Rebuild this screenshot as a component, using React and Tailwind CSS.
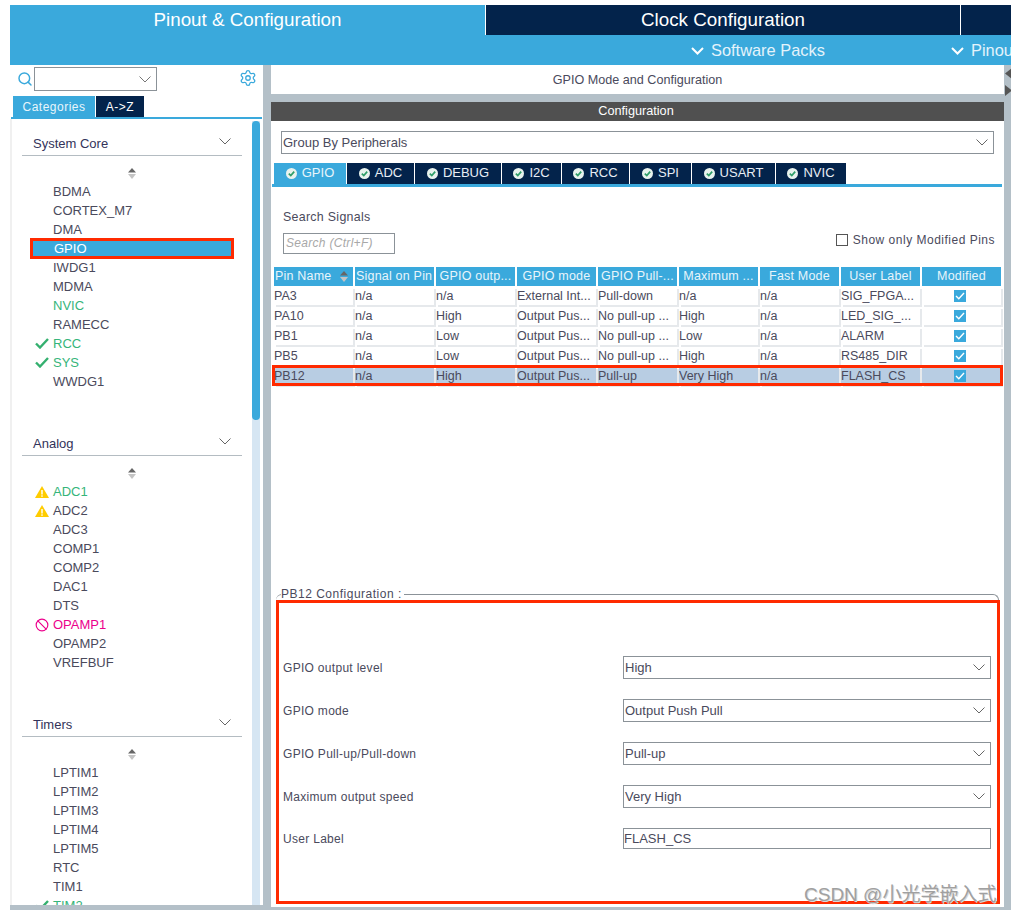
import React from "react";
import { Search, Settings, Ban } from "lucide-react";

const Chev = ({ className = "" }) => (
  <svg width="12" height="7" viewBox="0 0 12 7" className={className} fill="none" stroke="currentColor" strokeWidth="1">
    <path d="M0.5 0.5 L6 6 L11.5 0.5" />
  </svg>
);

const BoldChev = () => (
  <svg width="13" height="8" viewBox="0 0 13 8" fill="none" stroke="#fff" strokeWidth="2" className="shrink-0">
    <path d="M1 1 L6.5 6.5 L12 1" />
  </svg>
);

const Sorter = () => (
  <svg width="10" height="11" viewBox="0 0 10 11" className="block">
    <path d="M5 0 L9 4.5 L1 4.5 Z" fill="#666" />
    <path d="M1 6 L9 6 L5 11 Z" fill="#c4c4c4" />
  </svg>
);

const GreenCheck = () => (
  <svg width="14" height="11" viewBox="0 0 14 11" fill="none" stroke="#34b06f" strokeWidth="2.4">
    <path d="M1 5.5 L5 9.5 L13 1" />
  </svg>
);

const Warn = () => (
  <svg width="14" height="12" viewBox="0 0 14 12">
    <path d="M7 0 L14 12 L0 12 Z" fill="#ffcc00" />
    <rect x="6.3" y="4" width="1.4" height="4.5" fill="#fff" />
    <rect x="6.3" y="9.3" width="1.4" height="1.5" fill="#fff" />
  </svg>
);

const TabCheck = () => (
  <svg width="11" height="11" viewBox="0 0 11 11" className="shrink-0">
    <circle cx="5.5" cy="5.5" r="5.5" fill="#e8f3ee" />
    <path d="M2.8 5.6 L4.8 7.6 L8.2 3.6" fill="none" stroke="#2f9e69" strokeWidth="1.7" />
  </svg>
);

const C_GREEN = "text-[#35b57a]";

const sections = [
  {
    title: "System Core",
    items: [
      ["BDMA"], ["CORTEX_M7"], ["DMA"], ["GPIO", "selected"], ["IWDG1"], ["MDMA"], ["NVIC", "green"],
      ["RAMECC"], ["RCC", "green", "check"], ["SYS", "green", "check"], ["WWDG1"],
    ],
  },
  {
    title: "Analog",
    items: [
      ["ADC1", "green", "warn"], ["ADC2", "", "warn"], ["ADC3"], ["COMP1"], ["COMP2"], ["DAC1"], ["DTS"],
      ["OPAMP1", "pink", "ban"], ["OPAMP2"], ["VREFBUF"],
    ],
  },
  {
    title: "Timers",
    items: [
      ["LPTIM1"], ["LPTIM2"], ["LPTIM3"], ["LPTIM4"], ["LPTIM5"], ["RTC"], ["TIM1"], ["TIM2", "green", "check"],
    ],
  },
];

const Item = ({ name, tone, icon }) => {
  if (tone === "selected") {
    return (
      <div className="relative h-[19px]">
        <div className="absolute left-[18px] top-[-1px] w-[204px] h-[21px] bg-[#3aa9dc] border-[3px] border-[#ff2a00] pl-[21px] text-white leading-[15px]">
          {name}
        </div>
      </div>
    );
  }
  const color = tone === "green" ? C_GREEN : tone === "pink" ? "text-[#ec008c]" : "text-[#4a4a5c]";
  return (
    <div className={`relative h-[19px] leading-[19px] pl-[41px] ${color}`}>
      {icon && (
        <span className="absolute left-[22px] top-[3px] flex w-[15px] h-[13px] items-center justify-center">
          {icon === "check" && <GreenCheck />}
          {icon === "warn" && <Warn />}
          {icon === "ban" && <Ban size={14} strokeWidth={2} className="text-[#ec008c]" />}
        </span>
      )}
      {name}
    </div>
  );
};

const Section = ({ title, items }) => (
  <div className="mb-[40px]">
    <div className="mx-[10px] h-[25px] flex items-start justify-between border-b border-[#b4bcc2] w-[220px] pl-[11px] pr-[11px]">
      <span className="text-[#33335a] text-[13px] leading-[26px]">{title}</span>
      <Chev className="text-[#666] mt-[7px]" />
    </div>
    <div className="h-[26px] flex justify-center pt-[12px] w-[240px] ml-0">
      <Sorter />
    </div>
    <div>
      {items.map(([n, t, i]) => (
        <Item key={n} name={n} tone={t} icon={i} />
      ))}
    </div>
  </div>
);

const cols = ["Pin Name", "Signal on Pin", "GPIO outp...", "GPIO mode", "GPIO Pull-...", "Maximum ...", "Fast Mode", "User Label", "Modified"];
const rows = [
  ["PA3", "n/a", "n/a", "External Int...", "Pull-down", "n/a", "n/a", "SIG_FPGA..."],
  ["PA10", "n/a", "High", "Output Pus...", "No pull-up ...", "High", "n/a", "LED_SIG_..."],
  ["PB1", "n/a", "Low", "Output Pus...", "No pull-up ...", "Low", "n/a", "ALARM"],
  ["PB5", "n/a", "Low", "Output Pus...", "No pull-up ...", "High", "n/a", "RS485_DIR"],
  ["PB12", "n/a", "High", "Output Pus...", "Pull-up", "Very High", "n/a", "FLASH_CS"],
];

const tabs = [
  ["GPIO", "w-[72px]"], ["ADC", "w-[68px]"], ["DEBUG", "w-[87px]"], ["I2C", "w-[60px]"],
  ["RCC", "w-[68px]"], ["SPI", "w-[62px]"], ["USART", "w-[84px]"], ["NVIC", "w-[71px]"],
];

const Check = () => (
  <span className="w-[12px] h-[12px] bg-[#3aa9dc] flex items-center justify-center">
    <svg width="10" height="8" viewBox="0 0 10 8" fill="none" stroke="#fff" strokeWidth="1.4">
      <path d="M1 4 L3.8 6.8 L9 1" />
    </svg>
  </span>
);

const Sel = ({ value, className = "" }) => (
  <div className={`h-[23px] border border-[#8b9298] flex items-center justify-between pl-[1px] pr-[4px] ${className}`}>
    <span className="text-[#4a4a5c]">{value}</span>
    <Chev className="text-[#666] mr-[1px]" />
  </div>
);

const config = [
  ["GPIO output level", "High"],
  ["GPIO mode", "Output Push Pull"],
  ["GPIO Pull-up/Pull-down", "Pull-up"],
  ["Maximum output speed", "Very High"],
];

export default function App() {
  return (
    <div className="relative w-[1011px] h-[914px] bg-white pt-[5px] overflow-hidden text-[13px] text-[#4a4a5c] font-['Liberation_Sans',Arial,sans-serif]">
      {/* header */}
      <div className="ml-[10px] h-[60px] bg-[#3aa9dc] overflow-hidden">
        <div className="flex h-[30px] text-[18.8px] text-white">
          <div className="w-[475px] flex items-center justify-center">Pinout &amp; Configuration</div>
          <div className="w-[475px] border-l border-white bg-[#03234b] flex items-center justify-center">Clock Configuration</div>
          <div className="flex-1 border-l border-white bg-[#03234b]" />
        </div>
        <div className="flex h-[30px] items-center text-[16.4px] text-white pl-[681px] pt-[1px]">
          <BoldChev />
          <span className="ml-[7px] w-[125px] shrink-0 text-[#e4f3fb]">Software Packs</span>
          <span className="ml-[115px]"><BoldChev /></span>
          <span className="ml-[7px] text-[#e4f3fb]">Pinout</span>
        </div>
      </div>

      {/* main */}
      <div className="ml-[10px] h-[845px] bg-[#b4c0c8] flex items-start">
        {/* left */}
        <div className="w-[253px] h-[840px] bg-white flex flex-col shrink-0">
          <div className="h-[31px] flex items-start relative shrink-0">
            <Search size={16} strokeWidth={2.2} className="text-[#3aa9dc] ml-[7px] mt-[6px]" />
            <div className="ml-[1px] mt-[2px] w-[123px] h-[24px] border border-[#8b9298] flex items-center justify-end pr-[5px]">
              <Chev className="text-[#777] mt-[1px]" />
            </div>
            <Settings size={18} strokeWidth={1.7} className="text-[#3aa9dc] ml-[82px] mt-[4px]" />
          </div>
          <div className="h-[21px] flex pl-[3px] shrink-0 text-[12px] tracking-[0.5px]">
            <div className="w-[82px] bg-[#3aa9dc] text-[#e8f5fb] flex items-center justify-center">Categories</div>
            <div className="w-[48px] ml-[1px] bg-[#03234b] text-white flex items-center justify-center">A-&gt;Z</div>
          </div>
          <div className="h-[2px] ml-[1px] w-[251px] bg-[#3aa9dc] shrink-0" />
          <div className="flex-1 min-h-0 flex">
            <div className="w-[242px] border-l-2 border-[#f0f0f0] pt-[12px] overflow-hidden h-[786px]">
              {sections.map((s) => (
                <Section key={s.title} {...s} />
              ))}
            </div>
            <div className="w-[8px] mt-[2px] bg-[#d6e6f3] h-[784px]">
              <div className="h-[299px] bg-[#3aa9dc] rounded-[4px]" />
            </div>
          </div>
        </div>

        {/* right */}
        <div className="ml-[8px] w-[733px] h-[842px] flex flex-col shrink-0">
          <div className="h-[29px] bg-white flex items-center justify-center pt-[1px] text-[#4a4a5c] text-[12.6px] shrink-0">
            GPIO Mode and Configuration
          </div>
          <div className="h-[8px] shrink-0" />
          <div className="h-[19px] bg-[#505050] text-white text-[12.7px] flex items-center justify-center pr-[3px] pt-[1px] shrink-0">Configuration</div>
          <div className="flex-1 bg-white relative">
            <div className="pt-[10px] pl-[10px] pr-[10px]">
              <Sel value="Group By Peripherals" className="h-[22px]" />
            </div>
            <div className="mt-[9px] ml-[3px] flex h-[21px] text-[13px]">
              {tabs.map(([t, w], i) => (
                <div
                  key={t}
                  className={`${w} flex items-center justify-center gap-[5px] pb-[1px] shrink-0 ${i === 0 ? "bg-[#3aa9dc] text-[#e8f5fb]" : "bg-[#03234b] text-[#e8eef5] border-l border-white"}`}
                >
                  <TabCheck />
                  {t}
                </div>
              ))}
            </div>
            <div className="ml-[1px] w-[730px] h-[3px] bg-[#3aa9dc]" />

            <div className="flex items-start justify-between pl-[12px] pr-[9px] mt-[23px] h-[57px]">
              <div>
                <div className="h-[15px] leading-[15px] text-[#4a4a5c] text-[12.4px] tracking-[0.3px]">Search Signals</div>
                <div className="mt-[8px] w-[112px] h-[21px] border border-[#8b9298] pl-[2px] italic text-[#a8a8a8] leading-[19px] text-[12px] tracking-[0.3px]">Search (Ctrl+F)</div>
              </div>
              <div className="flex items-center gap-[5px] mt-[21px] text-[12px] tracking-[0.5px]">
                <span className="w-[12px] h-[12px] border border-[#555]" />
                Show only Modified Pins
              </div>
            </div>

            {/* table */}
            <div className="ml-[3px] w-[727px] text-[12.5px]">
              <div className="grid grid-cols-[repeat(9,79px)] gap-x-[2px] h-[19px] tracking-[0.2px]">
                {cols.map((c, i) => (
                  <div key={c} className={`relative bg-[#3aa9dc] text-[#e8f5fb] whitespace-nowrap overflow-hidden leading-[19px] ${i === 0 ? "pl-[1px]" : i === 1 ? "pl-[1px]" : "text-center"}`}>
                    {c}
                    {i === 0 && (
                      <span className="absolute right-[4px] top-[4px]"><Sorter /></span>
                    )}
                  </div>
                ))}
              </div>
              <div className="grid grid-cols-[repeat(9,79px)] gap-[2px] pt-[1px] bg-white">
                {rows.map((r, ri) => (
                  <React.Fragment key={r[0]}>
                    {r.concat(["check"]).map((v, i) => (
                      <div
                        key={i}
                        className={`h-[18px] leading-[18px] whitespace-nowrap overflow-hidden ${ri === 4 ? "bg-[#b8cde3]" : "bg-white"} ${i === 8 ? "flex items-center justify-center pr-[3px]" : ""} shadow-[2px_2px_0_#e6e9ec]`}
                      >
                        {v === "check" ? <Check /> : v}
                      </div>
                    ))}
                  </React.Fragment>
                ))}
              </div>
            </div>
            {/* highlighted row marker */}
            <div className="absolute left-[1px] top-[244px] w-[731px] h-[21px] border-[3px] border-[#ff2a00] pointer-events-none" />

            {/* config */}
            <div className="absolute left-[5px] top-[473px] w-[723px] h-[309px] rounded-tl-[6px] rounded-tr-[6px] border-t border-r border-[#8b9298]">
              <span className="absolute left-[5px] top-[-8px] bg-white pr-[2px] leading-[15px] text-[12px] tracking-[0.5px]">PB12 Configuration :</span>
              <div className="pt-[61px] pl-[7px] pr-[6px]">
                {config.map(([l, v]) => (
                  <div key={l} className="h-[43px] flex items-start">
                    <div className="w-[340px] h-[23px] flex items-center text-[12px] tracking-[0.3px]">{l}</div>
                    <Sel value={v} className="w-[368px]" />
                  </div>
                ))}
                <div className="h-[22px] flex items-start">
                  <div className="w-[340px] h-[21px] flex items-center text-[12px] tracking-[0.3px]">User Label</div>
                  <div className="w-[368px] h-[21px] border border-[#8b9298] flex items-center">FLASH_CS</div>
                </div>
              </div>
            </div>
            <div className="absolute left-[5px] top-[479px] w-[724px] h-[304px] border-[3px] border-[#ff2a00] pointer-events-none" />
          </div>
        </div>

        {/* splitter arrows */}
        <div className="ml-[1px] pt-[3px] flex flex-col gap-[6px] shrink-0">
          <svg width="7" height="11" viewBox="0 0 7 11"><path d="M7 0 L0 5.5 L7 11 Z" fill="#555" /></svg>
          <svg width="7" height="11" viewBox="0 0 7 11"><path d="M0 0 L7 5.5 L0 11 Z" fill="#555" /></svg>
        </div>
      </div>

      {/* watermark */}
      <div className="absolute left-[804px] top-[883px] text-[19px] leading-[24px] text-[#a0a0a0] [text-shadow:1px_1px_0_#d8d8d8] whitespace-nowrap font-['Liberation_Sans','Noto_Sans_CJK_SC',sans-serif]">
        CSDN @小光学嵌入式
      </div>
    </div>
  );
}
